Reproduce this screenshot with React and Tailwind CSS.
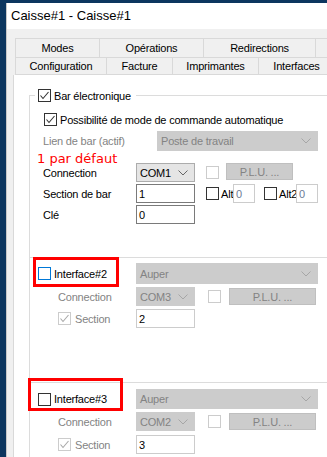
import React from 'react';

function Check({ checked, kind = 'normal' }) {
  const border =
    kind === 'focus' ? 'border-[#0078d7]' : kind === 'disabled' ? 'border-[#cccccc]' : 'border-[#333333]';
  const stroke = kind === 'disabled' ? '#a8a8a8' : '#333333';
  return (
    <span className={`w-[13px] h-[13px] shrink-0 border bg-white flex items-center justify-center ${border}`}>
      {checked && (
        <svg width="11" height="11" viewBox="0 0 11 11">
          <polyline points="1.5,5.5 4,8.5 9.5,2" fill="none" stroke={stroke} strokeWidth="1.1" />
        </svg>
      )}
    </span>
  );
}

function Chevron({ color }) {
  return (
    <svg width="10" height="6" viewBox="0 0 10 6" className="shrink-0">
      <polyline points="0.5,0.5 5,5 9.5,0.5" fill="none" stroke={color} strokeWidth="1" />
    </svg>
  );
}

function Combo({ value, width, height = 'h-[19px]', disabled }) {
  return (
    <div
      className={`${width} ${height} shrink-0 border flex items-center justify-between pl-[3px] pr-[6px] ${
        disabled ? 'bg-[#cccccc] border-[#cccccc] text-[#838383]' : 'bg-[#e5e5e5] border-[#acacac] text-black'
      }`}
    >
      <span>{value}</span>
      <Chevron color={disabled ? '#a6a6a6' : '#666666'} />
    </div>
  );
}

function Field({ value, width, dark, muted }) {
  return (
    <div
      className={`${width} h-[19px] shrink-0 bg-white border flex items-center pl-[2px] ${
        dark ? 'border-[#7a7a7a]' : 'border-[#cccccc]'
      } ${muted ? 'text-[#6d7c96]' : 'text-black'}`}
    >
      {value}
    </div>
  );
}

function PluButton({ width }) {
  return (
    <div
      className={`${width} h-[17px] shrink-0 self-start bg-[#cccccc] border border-[#bfbfbf] text-[#838383] flex items-center justify-center`}
    >
      P.L.U. ...
    </div>
  );
}

function InterfaceGroup({ num, com, section, focus, box, pad, gap3 }) {
  return (
    <div className={`relative border-t border-[#dcdcdc] ${pad}`}>
      <div className={`flex items-center ${num === 2 ? 'h-[21px]' : 'h-[20px]'}`}>
        <div className="w-[106px] flex items-center pl-[8px]">
          <Check kind={focus ? 'focus' : 'normal'} />
          <span className="ml-[3px]">Interface#{num}</span>
        </div>
        <Combo value="Auper" width="w-[182px]" height={num === 2 ? 'h-[21px]' : 'h-[20px]'} disabled />
      </div>
      <div className="mt-[3px] h-[19px] flex items-center">
        <div className="w-[106px] pl-[28px] text-[#838383]">Connection</div>
        <Combo value={com} width="w-[59px]" disabled />
        <span className="ml-[13px]">
          <Check kind="disabled" />
        </span>
        <span className="ml-[8px] flex">
          <PluButton width="w-[87px]" />
        </span>
      </div>
      <div className={`${gap3} h-[19px] flex items-center`}>
        <div className="w-[106px] pl-[28px] flex items-center text-[#838383]">
          <Check checked kind="disabled" />
          <span className="ml-[4px]">Section</span>
        </div>
        <Field value={section} width="w-[59px]" />
      </div>
      <div className={`absolute pointer-events-none border-[3px] border-[#ff0000] ${box}`} />
    </div>
  );
}

export default function App() {
  return (
    <div className="w-[327px] h-[457px] overflow-hidden bg-[#0c365f] pt-[3px] pl-[6px] font-['Liberation_Sans'] text-[11px] leading-[14px] tracking-[-0.2px] text-black">
      <div className="h-full w-[330px] flex flex-col bg-[#f0f0f0] border-l border-[#c8c8c8]">
        <div className="h-[26px] shrink-0 bg-white flex items-center pl-[4px] text-[13px] tracking-normal">
          Caisse#1 - Caisse#1
        </div>

        <div className="flex-1 flex flex-col pt-[9px] pl-[6px]">
          <div className="pl-[2px]">
            <div className="h-[19px] flex border-t border-[#d9d9d9]">
              {[
                ['Modes', 'w-[84px]'],
                ['Opérations', 'w-[104px]'],
                ['Redirections', 'w-[112px]'],
                ['', 'w-[30px]'],
              ].map(([t, w]) => (
                <div key={w} className={`${w} shrink-0 border-l border-[#d9d9d9] flex items-center justify-center`}>
                  {t}
                </div>
              ))}
            </div>
            <div className="h-[18px] flex border-t border-b border-[#d9d9d9]">
              {[
                ['Configuration', 'w-[91px]'],
                ['Facture', 'w-[66px]'],
                ['Imprimantes', 'w-[86px]'],
                ['Interfaces', 'w-[76px]'],
              ].map(([t, w]) => (
                <div key={w} className={`${w} shrink-0 border-l border-[#d9d9d9] flex items-center justify-center`}>
                  {t}
                </div>
              ))}
            </div>
          </div>

          <div className="flex-1 flex flex-col bg-white border-l border-[#d9d9d9]">
            <div className="flex-1 flex flex-col ml-[15px] mt-[20px] border-l border-[#dcdcdc]">
              <div className="relative h-[162px] shrink-0 border-t border-[#dcdcdc]">
                <div className="-mt-[7px] h-[13px] w-fit ml-[5px] pl-[3px] pr-[5px] bg-white flex items-center">
                  <Check checked />
                  <span className="ml-[3px]">Bar électronique</span>
                </div>

                <div className="mt-[11px] h-[13px] flex items-center pl-[14px]">
                  <Check checked />
                  <span className="ml-[3px]">Possibilité de mode de commande automatique</span>
                </div>

                <div className="mt-[5px] h-[20px] flex items-center">
                  <div className="w-[127px] pl-[13px] text-[#838383]">Lien de bar (actif)</div>
                  <Combo value="Poste de travail" width="w-[161px]" height="h-[20px]" disabled />
                </div>

                <div className="mt-[12px] h-[19px] flex items-center">
                  <div className="w-[106px] pl-[13px]">Connection</div>
                  <Combo value="COM1" width="w-[59px]" />
                  <span className="ml-[11px]">
                    <Check kind="disabled" />
                  </span>
                  <span className="ml-[7px] flex self-start">
                    <PluButton width="w-[67px]" />
                  </span>
                </div>

                <div className="mt-[2px] h-[19px] flex items-center">
                  <div className="w-[106px] pl-[13px]">Section de bar</div>
                  <Field value="1" width="w-[59px]" dark />
                  <span className="ml-[11px]">
                    <Check />
                  </span>
                  <span className="ml-[2px] w-[12px] whitespace-nowrap">Alt</span>
                  <Field value="0" width="w-[22px]" muted />
                  <span className="ml-[9px]">
                    <Check />
                  </span>
                  <span className="ml-[2px] w-[17px] whitespace-nowrap">Alt2</span>
                  <Field value="0" width="w-[22px]" muted />
                </div>

                <div className="mt-[2px] h-[19px] flex items-center">
                  <div className="w-[106px] pl-[13px]">Clé</div>
                  <Field value="0" width="w-[59px]" dark />
                </div>

                <div className="absolute left-[7px] top-[55px] font-['DejaVu_Sans'] text-[13px] leading-[15px] tracking-normal text-[#ff0000] pointer-events-none">
                  1 par défaut
                </div>
              </div>

              <div className="h-[125px] shrink-0 flex flex-col">
                <InterfaceGroup
                  num={2}
                  com="COM3"
                  section="2"
                  focus
                  pad="pt-[5px] flex-1"
                  gap3="mt-[3px]"
                  box="left-[3px] -top-[1px] w-[86px] h-[30px]"
                />
              </div>
              <div className="flex-1 flex flex-col">
                <InterfaceGroup
                  num={3}
                  com="COM2"
                  section="3"
                  pad="pt-[6px] flex-1"
                  gap3="mt-[4px]"
                  box="-left-[2px] -top-[5px] w-[95px] h-[33px]"
                />
              </div>
            </div>
          </div>
        </div>
      </div>
    </div>
  );
}
